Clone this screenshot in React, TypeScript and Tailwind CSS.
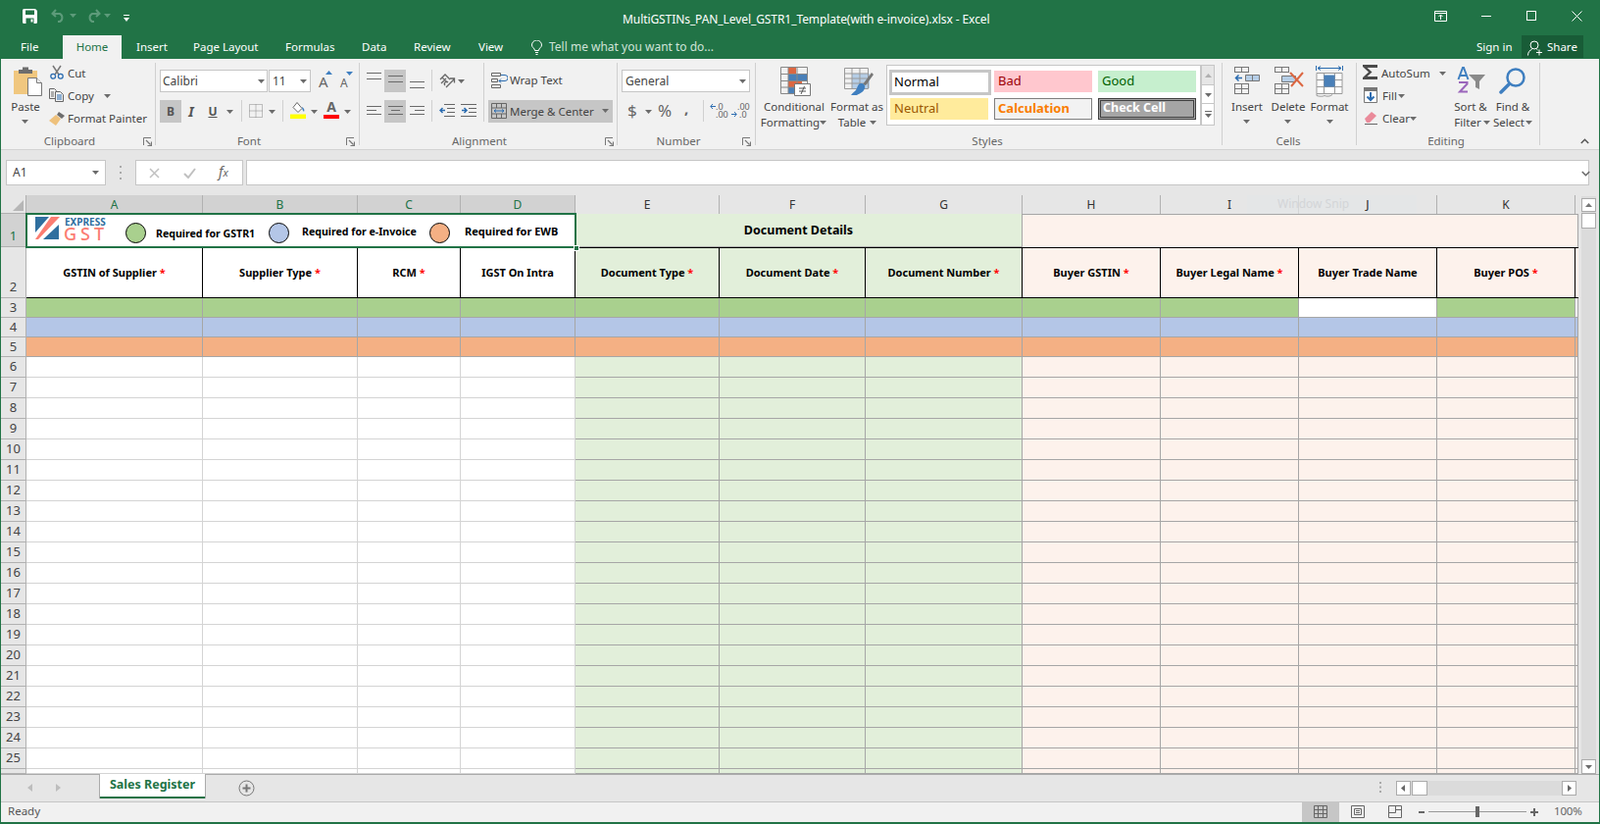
import React from 'react';

const Caret = ({ c, color = '#6b6b6b' }: { c: string; color?: string }) => (
  <svg className={`absolute ${c}`} width="7" height="4" viewBox="0 0 7 4"><path d="M0 0h7L3.5 4z" fill={color} /></svg>
);

const T = ({ c, children }: { c: string; children: React.ReactNode }) => (
  <div className={`absolute whitespace-nowrap text-[11.5px] leading-[16px] ${c}`}>{children}</div>
);

const TabLabel = ({ c, children }: { c: string; children: React.ReactNode }) => (
  <div className={`absolute top-[40px] whitespace-nowrap text-[11.5px] leading-[16px] text-white ${c}`}>{children}</div>
);

const Sep = ({ c }: { c: string }) => <div className={`absolute w-px bg-[#d0d0d0] ${c}`} />;

const Launcher = ({ c }: { c: string }) => (
  <svg className={`absolute ${c}`} width="9" height="9" viewBox="0 0 9 9" fill="none" stroke="#777">
    <path d="M.5 8V.5H8" /><path d="M3 3l4.5 4.5M8.5 4.5v4h-4" strokeWidth="1.2" />
  </svg>
);

const Lines = ({ c, d }: { c: string; d: string }) => (
  <svg className={`absolute ${c}`} width="15" height="10" viewBox="0 0 15 10" stroke="#6a6a6a"><path d={d} /></svg>
);

const StyleBtn = ({ c, children }: { c: string; children: React.ReactNode }) => (
  <div className={`absolute flex items-center pb-[2px] text-[13px] leading-none ${c}`}>{children}</div>
);

const GridMini = ({ c, rows = 2, cols = 2, w, h }: { c: string; rows?: number; cols?: number; w: number; h: number }) => {
  const lines: string[] = [];
  for (let i = 0; i <= rows; i++) lines.push(`M0 ${(i * (h - 1)) / rows + 0.5}H${w}`);
  for (let i = 0; i <= cols; i++) lines.push(`M${(i * (w - 1)) / cols + 0.5} 0V${h}`);
  return (
    <svg className={`absolute ${c}`} width={w} height={h} viewBox={`0 0 ${w} ${h}`} fill="none" stroke="#777">
      <path d={lines.join('')} />
    </svg>
  );
};

function TitleBar() {
  return (
    <div className="relative h-[60px] bg-[#217346] text-white">
      <svg className="absolute left-[23px] top-[9px]" width="15" height="15" viewBox="0 0 15 15">
        <path d="M0 1.5A1.5 1.5 0 0 1 1.5 0H13l2 2v11.5a1.5 1.5 0 0 1-1.5 1.5h-12A1.5 1.5 0 0 1 0 13.500z" fill="#fff" />
        <path d="M3 1.500h9v4.500H3zM3.500 9.500h8V15h-8z" fill="#217346" />
        <path d="M8.500 10.500h2v3h-2z" fill="#fff" />
      </svg>
      <svg className="absolute left-[52px] top-[8px]" width="16" height="15" viewBox="0 0 16 15" fill="none" stroke="#5d9b7a" strokeWidth="2">
        <path d="M5 2L1.500 6 5 9" /><path d="M2 6h7a4.500 4.500 0 0 1 0 8H7" />
      </svg>
      <Caret c="left-[71px] top-[14px]" color="#5d9b7a" />
      <svg className="absolute left-[87px] top-[8px]" width="16" height="15" viewBox="0 0 16 15" fill="none" stroke="#5d9b7a" strokeWidth="2">
        <path d="M11 2l3.500 4L11 9" /><path d="M14 6H7a4.500 4.500 0 0 0 0 8h2" />
      </svg>
      <Caret c="left-[106px] top-[14px]" color="#5d9b7a" />
      <svg className="absolute left-[126px] top-[15px]" width="6" height="7" viewBox="0 0 6 7" fill="#fff">
        <path d="M0 0h6v1H0zM0 3h6L3 7z" />
      </svg>
      <div className="absolute left-[635px] top-[12px] whitespace-nowrap text-[12px] leading-[16px] tracking-[-0.08px] text-white">MultiGSTINs_PAN_Level_GSTR1_Template(with e-invoice).xlsx - Excel</div>

      <svg className="absolute left-[1463px] top-[11px]" width="13" height="11" viewBox="0 0 13 11" fill="none" stroke="#fff">
        <path d="M.5.500h12v10H.500zM.5 2.500h12M6.500 9V4.500M4.500 6l2-2 2 2" />
      </svg>
      <div className="absolute left-[1511px] top-[16px] h-px w-[10px] bg-white" />
      <div className="absolute left-[1557px] top-[11px] h-[10px] w-[10px] border border-white" />
      <svg className="absolute left-[1603px] top-[11px]" width="11" height="11" viewBox="0 0 11 11" stroke="#fff">
        <path d="M.5.500l10 10M10.500.500l-10 10" />
      </svg>

      <TabLabel c="left-[21px]">File</TabLabel>
      <div className="absolute left-[64px] top-[36px] flex h-[24px] w-[60px] items-center justify-center bg-[#f1f1f1] text-[11.5px] text-[#217346]">Home</div>
      <TabLabel c="left-[139px]">Insert</TabLabel>
      <TabLabel c="left-[197px]">Page Layout</TabLabel>
      <TabLabel c="left-[291px]">Formulas</TabLabel>
      <TabLabel c="left-[369px]">Data</TabLabel>
      <TabLabel c="left-[422px]">Review</TabLabel>
      <TabLabel c="left-[488px]">View</TabLabel>
      <svg className="absolute left-[542px] top-[41px]" width="11" height="15" viewBox="0 0 11 15" fill="none" stroke="#fff">
        <path d="M3.500 10.500C3.500 8 .5 7.500.5 5a5 5 0 0 1 10 0c0 2.500-3 3-3 5.500zM4 12.500h3M4.500 14.500h2" />
      </svg>
      <div className="absolute left-[560px] top-[40px] whitespace-nowrap text-[12px] leading-[16px] text-[#cfe3d8]">Tell me what you want to do...</div>
      <TabLabel c="left-[1506px]">Sign in</TabLabel>
      <div className="absolute left-[1552px] top-[36px] h-[23px] w-[63px] bg-[#185c37]" />
      <svg className="absolute left-[1558px] top-[41px]" width="16" height="16" viewBox="0 0 16 16" fill="none" stroke="#fff">
        <circle cx="7" cy="5" r="4" /><path d="M.5 15.500c0-3.500 2-5.500 4-6M9.500 9.500l1 .5M9 12.500h6M12 9.500v6" />
      </svg>
      <TabLabel c="left-[1578px]">Share</TabLabel>
    </div>
  );
}

function ClipboardGroup() {
  return (
    <>
      <svg className="absolute left-[14px] top-[7px]" width="29" height="31" viewBox="0 0 29 31">
        <path d="M0 5h24v24H0z" fill="#f0c77f" />
        <path d="M5 4h4V1.500h6V4h4v4H5z" fill="#6d6d6d" />
        <path d="M14.500 12.500h9l5 5v13h-14z" fill="#fff" stroke="#777" />
        <path d="M23.500 12.500v5h5" fill="#fff" stroke="#777" />
      </svg>
      <T c="left-[26px] top-[41px] -translate-x-1/2">Paste</T>
      <Caret c="left-[22px] top-[62px]" />
      <svg className="absolute left-[51px] top-[6px]" width="14" height="15" viewBox="0 0 14 15" fill="none">
        <path d="M3 1l6 9M11 1L5 10" stroke="#777" strokeWidth="1.500" />
        <circle cx="3.200" cy="11.800" r="2.400" stroke="#2b6cb0" strokeWidth="1.300" />
        <circle cx="10.800" cy="11.800" r="2.400" stroke="#2b6cb0" strokeWidth="1.300" />
      </svg>
      <T c="left-[69px] top-[7px]">Cut</T>
      <svg className="absolute left-[50px] top-[30px]" width="15" height="14" viewBox="0 0 15 14" fill="none" stroke="#666">
        <path d="M.5.500h5l2 2v8h-7zM2 4h3M2 6h3M2 8h3" />
        <path d="M6.500 3.500h5l3 3v7h-8z" fill="#f1f1f1" />
        <path d="M8 7h5M8 9h5M8 11h5" stroke="#2b6cb0" />
      </svg>
      <T c="left-[69px] top-[30px]">Copy</T>
      <Caret c="left-[106px] top-[36px]" />
      <svg className="absolute left-[50px] top-[54px]" width="16" height="14" viewBox="0 0 16 14">
        <path d="M10 0l6 4-3 3-5-4z" fill="#6d6d6d" />
        <path d="M7 3l5 4-5 7-7-5z" fill="#eec17c" />
      </svg>
      <T c="left-[69px] top-[53px]">Format Painter</T>
      <T c="left-[71px] top-[76px] -translate-x-1/2 text-[#666]">Clipboard</T>
      <Launcher c="left-[146px] top-[80px]" />
      <Sep c="left-[158px] top-[4px] h-[84px]" />
    </>
  );
}

function FontGroup() {
  return (
    <>
      <div className="absolute left-[163px] top-[11px] h-[23px] w-[110px] border border-[#c6c6c6] bg-white pl-[2px] text-[12px] leading-[22px]">Calibri</div>
      <Caret c="left-[263px] top-[21px]" />
      <div className="absolute left-[274px] top-[11px] h-[23px] w-[43px] border border-[#c6c6c6] bg-white pl-[3px] text-[12px] leading-[22px]">11</div>
      <Caret c="left-[306px] top-[21px]" />
      <div className="absolute left-[325px] top-[14px] text-[15px] leading-[18px] text-[#666]">A</div>
      <svg className="absolute left-[332px] top-[12px]" width="7" height="4" viewBox="0 0 7 4"><path d="M0 4h7L3.500 0z" fill="#3f7fc0" /></svg>
      <div className="absolute left-[347px] top-[17px] text-[12px] leading-[16px] text-[#666]">A</div>
      <svg className="absolute left-[353px] top-[13px]" width="7" height="4" viewBox="0 0 7 4"><path d="M0 0h7L3.500 4z" fill="#3f7fc0" /></svg>

      <div className="absolute left-[163px] top-[42px] flex h-[23px] w-[22px] items-center justify-center bg-[#c6c6c6] text-[12px] font-bold text-[#555]">B</div>
      <div className="absolute left-[190px] top-[42px] flex h-[23px] w-[10px] items-center justify-center font-['Liberation_Serif',serif] text-[14px] font-bold italic text-[#555]">I</div>
      <div className="absolute left-[212px] top-[42px] flex h-[23px] w-[10px] items-center justify-center text-[12px] font-bold text-[#555] underline">U</div>
      <Caret c="left-[231px] top-[52px]" />
      <Sep c="left-[246px] top-[42px] h-[22px]" />
      <svg className="absolute left-[254px] top-[46px]" width="14" height="14" viewBox="0 0 14 14" fill="none" stroke="#888" strokeDasharray="1 1">
        <path d="M.5.500h13v13H.500zM7 .5v13M.5 7h13" />
      </svg>
      <Caret c="left-[274px] top-[52px]" />
      <Sep c="left-[288px] top-[42px] h-[22px]" />
      <svg className="absolute left-[296px] top-[44px]" width="16" height="17" viewBox="0 0 16 17">
        <path d="M7 .5l5 6-4 4-5-5z" fill="#fff" stroke="#666" />
        <path d="M12 5c2 1 3 3 2 5-1-1-2-3-2-5z" fill="#3f7fc0" />
        <path d="M0 12.500h16V17H0z" fill="#ffff00" />
      </svg>
      <Caret c="left-[317px] top-[52px]" />
      <div className="absolute left-[332px] top-[40px] w-[12px] text-center text-[14px] font-bold leading-[18px] text-[#666]">A</div>
      <div className="absolute left-[330px] top-[57px] h-[4px] w-[16px] bg-[#ff0000]" />
      <Caret c="left-[351px] top-[52px]" />
      <T c="left-[254px] top-[76px] -translate-x-1/2 text-[#666]">Font</T>
      <Launcher c="left-[353px] top-[80px]" />
      <Sep c="left-[366px] top-[4px] h-[84px]" />
    </>
  );
}

function AlignmentGroup() {
  return (
    <>
      <Lines c="left-[374px] top-[14px]" d="M0 .5h15M0 6.500h15" />
      <div className="absolute left-[392px] top-[11px] h-[23px] w-[22px] bg-[#c6c6c6]" />
      <Lines c="left-[396px] top-[17px]" d="M0 .5h15M0 6.500h15" />
      <Lines c="left-[418px] top-[23px]" d="M0 .5h15M0 6.500h15" />
      <Sep c="left-[440px] top-[11px] h-[22px]" />
      <svg className="absolute left-[448px] top-[14px]" width="17" height="17" viewBox="0 0 17 17" fill="none" stroke="#666" strokeWidth="1.300">
        <path d="M1 7l5-5 5 5M3 5l5 5M2 11l5-5M6 13a2 2 0 1 1 3-3" /><path d="M7 15l8-8M11 6h4.500v4.500" />
      </svg>
      <Caret c="left-[467px] top-[21px]" />
      <Sep c="left-[493px] top-[4px] h-[60px]" />
      <svg className="absolute left-[501px] top-[14px]" width="17" height="16" viewBox="0 0 17 16" fill="none" stroke="#666">
        <path d="M.5.500h9v3h-9zM.5 6.500h6v3h-6zM.5 12.500h9v3h-9z" /><path d="M10 2.500h4a2.500 2.500 0 0 1 0 6H8M10 6.500l-2 2 2 2" stroke="#2b6cb0" />
      </svg>
      <T c="left-[520px] top-[14px]">Wrap Text</T>

      <Lines c="left-[374px] top-[48px]" d="M0 .5h15M0 4.500h10M0 8.500h15" />
      <div className="absolute left-[392px] top-[42px] h-[23px] w-[22px] bg-[#c6c6c6]" />
      <Lines c="left-[396px] top-[48px]" d="M0 .5h15M3 4.500h9M0 8.500h15" />
      <Lines c="left-[418px] top-[48px]" d="M0 .5h15M5 4.500h10M0 8.500h15" />
      <Sep c="left-[440px] top-[42px] h-[22px]" />
      <svg className="absolute left-[448px] top-[46px]" width="16" height="14" viewBox="0 0 16 14" fill="none" stroke="#666">
        <path d="M5 .5h11M8 4.500h8M8 8.500h8M5 12.500h11" /><path d="M6 6.500H1M3.500 4l-2.500 2.500L3.500 9" stroke="#2b6cb0" strokeWidth="1.500" />
      </svg>
      <svg className="absolute left-[470px] top-[46px]" width="16" height="14" viewBox="0 0 16 14" fill="none" stroke="#666">
        <path d="M0 .5h16M8 4.500h8M8 8.500h8M0 12.500h16" /><path d="M1 6.500h5M3.500 4L6 6.500 3.500 9" stroke="#2b6cb0" strokeWidth="1.500" />
      </svg>
      <div className="absolute left-[498px] top-[42px] h-[23px] w-[127px] bg-[#c6c6c6]" />
      <svg className="absolute left-[501px] top-[45px]" width="16" height="16" viewBox="0 0 16 16" fill="none" stroke="#666">
        <path d="M.5.500h15v15H.500zM.5 5h15M.5 11h15M5.500.5V5M10.500.5V5M5.500 11v4.500M10.500 11v4.500" /><path d="M3 8h10M3 8l2-1.500M3 8l2 1.500M13 8l-2-1.500M13 8l-2 1.500" stroke="#2b6cb0" />
      </svg>
      <T c="left-[520px] top-[46px]">Merge &amp; Center</T>
      <Caret c="left-[614px] top-[51px]" />
      <T c="left-[489px] top-[76px] -translate-x-1/2 text-[#666]">Alignment</T>
      <Launcher c="left-[617px] top-[80px]" />
      <Sep c="left-[629px] top-[4px] h-[84px]" />
    </>
  );
}

function NumberGroup() {
  return (
    <>
      <div className="absolute left-[634px] top-[11px] h-[23px] w-[131px] border border-[#c6c6c6] bg-white pl-[3px] text-[12px] leading-[22px]">General</div>
      <Caret c="left-[754px] top-[21px]" />
      <div className="absolute left-[640px] top-[43px] text-[17px] leading-[20px] text-[#666]">$</div>
      <Caret c="left-[658px] top-[52px]" />
      <div className="absolute left-[671px] top-[43px] text-[17px] leading-[20px] text-[#666]">%</div>
      <div className="absolute left-[698px] top-[40px] text-[15px] font-bold leading-[20px] text-[#666]">,</div>
      <Sep c="left-[717px] top-[42px] h-[22px]" />
      <div className="absolute left-[730px] top-[45px] text-[9px] leading-[8px] text-[#666]">.0<br />.00</div>
      <svg className="absolute left-[724px] top-[45px]" width="6" height="7" viewBox="0 0 6 7" fill="none" stroke="#2b6cb0"><path d="M6 3.500H1M3 1L.8 3.500 3 6" /></svg>
      <div className="absolute left-[752px] top-[45px] text-[9px] leading-[8px] text-[#666]">.00<br /><span className="pl-[2px]">.0</span></div>
      <svg className="absolute left-[746px] top-[53px]" width="6" height="7" viewBox="0 0 6 7" fill="none" stroke="#2b6cb0"><path d="M0 3.500h5M3 1l2.200 2.500L3 6" /></svg>
      <T c="left-[692px] top-[76px] -translate-x-1/2 text-[#666]">Number</T>
      <Launcher c="left-[757px] top-[80px]" />
      <Sep c="left-[770px] top-[4px] h-[84px]" />
    </>
  );
}

function StylesGroup() {
  return (
    <>
      <svg className="absolute left-[796px] top-[8px]" width="31" height="30" viewBox="0 0 31 30" fill="none">
        <path d="M8 1h8v7H8z" fill="#dc6742" /><path d="M8 8h19v6H8z" fill="#4a80b8" /><path d="M8 14h14v7H8z" fill="#dc6742" /><path d="M8 21h6v6H8z" fill="#4a80b8" />
        <path d="M.5.500h27v27H.500zM.5 7.500h27M.5 14.500h27M.5 21h27M8 .5v27M17 .5v27" stroke="#888" />
        <path d="M14.500 17.500h16v12h-16z" fill="#fff" stroke="#777" />
        <path d="M19 22h7M19 25h7M24.500 20l-3.500 8" stroke="#555" />
      </svg>
      <T c="left-[810px] top-[41px] -translate-x-1/2">Conditional</T>
      <T c="left-[806px] top-[57px] -translate-x-1/2">Formatting</T>
      <Caret c="left-[836px] top-[63px]" />
      <svg className="absolute left-[861px] top-[9px]" width="30" height="29" viewBox="0 0 30 29" fill="none">
        <path d="M8 6h18v15H8z" fill="#b5cde6" />
        <path d="M.5.500h24v21H.500zM.5 6h24M.5 11h24M.5 16h24M8 .5v21M16 .5v21" stroke="#999" />
        <path d="M19 17l9-12 2 2-8 11z" fill="#777" />
        <path d="M17 16c3 0 5 2 4 5-1 4-5 5-8 7H7c2-3 5-4 6-7 1-3 2-5 4-5z" fill="#3f7fc0" />
      </svg>
      <T c="left-[874px] top-[41px] -translate-x-1/2">Format as</T>
      <T c="left-[869px] top-[57px] -translate-x-1/2">Table</T>
      <Caret c="left-[887px] top-[63px]" />

      <div className="absolute left-[904px] top-[6px] h-[62px] w-[321px] border border-[#c6c6c6] bg-white" />
      <StyleBtn c="left-[907px] top-[11px] h-[26px] w-[104px] border-[3px] border-[#c6c6c6] bg-white pl-[2px] text-black">Normal</StyleBtn>
      <StyleBtn c="left-[1014px] top-[12px] h-[22px] w-[100px] bg-[#ffc7ce] pl-[4px] text-[#9c0006]">Bad</StyleBtn>
      <StyleBtn c="left-[1120px] top-[12px] h-[22px] w-[100px] bg-[#c6efce] pl-[4px] text-[#006100]">Good</StyleBtn>
      <StyleBtn c="left-[908px] top-[40px] h-[22px] w-[100px] bg-[#ffeb9c] pl-[4px] text-[#9c5700]">Neutral</StyleBtn>
      <StyleBtn c="left-[1014px] top-[40px] h-[22px] w-[100px] border border-[#7f7f7f] bg-[#f2f2f2] pl-[3px] font-bold text-[#fa7d00]">Calculation</StyleBtn>
      <div className="absolute left-[1120px] top-[40px] h-[22px] w-[100px] border border-[#3f3f3f] bg-[#a5a5a5] p-px">
        <div className="flex h-full items-center border border-[#3f3f3f] pb-px pl-[2px] text-[12.5px] font-bold leading-none text-white">Check Cell</div>
      </div>
      <div className="absolute left-[1225px] top-[6px] h-[21px] w-[14px] border border-[#c6c6c6] bg-[#e6e6e6]" />
      <svg className="absolute left-[1229px] top-[15px]" width="7" height="4" viewBox="0 0 7 4"><path d="M0 4h7L3.500 0z" fill="#b0b0b0" /></svg>
      <div className="absolute left-[1225px] top-[26px] h-[20px] w-[14px] border border-[#c6c6c6] bg-white" />
      <Caret c="left-[1229px] top-[35px]" />
      <div className="absolute left-[1225px] top-[45px] h-[23px] w-[14px] border border-[#c6c6c6] bg-white" />
      <svg className="absolute left-[1229px] top-[53px]" width="7" height="7" viewBox="0 0 7 7"><path d="M0 0h7v1H0zM0 3h7L3.500 7z" fill="#6b6b6b" /></svg>
      <T c="left-[1007px] top-[76px] -translate-x-1/2 text-[#666]">Styles</T>
      <Sep c="left-[1246px] top-[4px] h-[84px]" />
    </>
  );
}

function CellsGroup() {
  return (
    <>
      <GridMini c="left-[1259px] top-[8px]" rows={1} w={15} h={6} />
      <GridMini c="left-[1259px] top-[25px]" w={15} h={11} />
      <svg className="absolute left-[1259px] top-[15px]" width="26" height="9" viewBox="0 0 26 9" fill="none">
        <path d="M11.500 1.500h14v6h-14z" fill="#b5cde6" stroke="#777" /><path d="M18.500 1.500v6" stroke="#777" />
        <path d="M8 4.500H1.500M4.500 1.500l-3 3 3 3" stroke="#2b6cb0" strokeWidth="1.500" />
      </svg>
      <T c="left-[1272px] top-[41px] -translate-x-1/2">Insert</T>
      <Caret c="left-[1268px] top-[62px]" />

      <GridMini c="left-[1300px] top-[8px]" rows={1} w={15} h={6} />
      <GridMini c="left-[1300px] top-[25px]" w={15} h={11} />
      <svg className="absolute left-[1306px] top-[12px]" width="25" height="19" viewBox="0 0 25 19" fill="none">
        <path d="M1.500 5.500h14v6h-14z" fill="#b5cde6" stroke="#777" />
        <path d="M11 16L23 2M10 2l13 14" stroke="#dc6742" strokeWidth="2" />
      </svg>
      <T c="left-[1314px] top-[41px] -translate-x-1/2">Delete</T>
      <Caret c="left-[1310px] top-[62px]" />

      <svg className="absolute left-[1342px] top-[6px]" width="28" height="33" viewBox="0 0 28 33" fill="none">
        <path d="M.5 1v5M27.500 1v5M2 3.500h24M2 3.500l3-2M2 3.500l3 2M26 3.500l-3-2M26 3.500l-3 2" stroke="#2b6cb0" />
        <path d="M1 8.500h26v21H1z" fill="#fff" stroke="#999" />
        <path d="M1 15.500h26M1 22.500h26M8.500 8.500v21M19.500 8.500v21" stroke="#999" />
        <path d="M8.500 10.500h11v12h-11z" fill="#4a80b8" />
        <path d="M1 29.500v2c3 1 6 1 8 0 2 1 6 1 8-1" stroke="#999" />
      </svg>
      <T c="left-[1356px] top-[41px] -translate-x-1/2">Format</T>
      <Caret c="left-[1353px] top-[62px]" />
      <T c="left-[1314px] top-[76px] -translate-x-1/2 text-[#666]">Cells</T>
      <Sep c="left-[1383px] top-[4px] h-[84px]" />
    </>
  );
}

function EditingGroup() {
  return (
    <>
      <svg className="absolute left-[1390px] top-[6px]" width="15" height="15" viewBox="0 0 15 15"><path d="M0 0h15v3H4.500l5 4.500-5 4.500H15v3H0v-2l6-5.500L0 2z" fill="#4b4b4b" /></svg>
      <T c="left-[1409px] top-[7px]">AutoSum</T>
      <Caret c="left-[1468px] top-[13px]" />
      <svg className="absolute left-[1391px] top-[29px]" width="14" height="16" viewBox="0 0 14 16" fill="none">
        <path d="M.5.500h13v15H.500z" fill="#fff" stroke="#777" /><path d="M0 0h14v4H0z" fill="#777" />
        <path d="M7 5v8M3.500 9.500L7 13l3.500-3.500" stroke="#2b6cb0" strokeWidth="2" />
      </svg>
      <T c="left-[1410px] top-[30px]">Fill</T>
      <Caret c="left-[1426px] top-[36px]" />
      <svg className="absolute left-[1391px] top-[53px]" width="14" height="14" viewBox="0 0 14 14" fill="none">
        <path d="M1 8l7-7 5 4-7 7H3z" fill="#ea8a9a" /><path d="M1 13.500h13" stroke="#666" />
      </svg>
      <T c="left-[1410px] top-[53px]">Clear</T>
      <Caret c="left-[1438px] top-[59px]" />

      <svg className="absolute left-[1486px] top-[8px]" width="29" height="28" viewBox="0 0 29 28" fill="none">
        <path d="M1.500 13L6 1h1l4.500 12M3 9h7" stroke="#3f7fc0" strokeWidth="2" />
        <path d="M2 16h8.500v1.500L3 25.500h8" stroke="#9b66bb" strokeWidth="2" />
        <path d="M12 8h17l-6 7v8l-4-2v-6z" fill="#8a8a8a" />
      </svg>
      <T c="left-[1500px] top-[41px] -translate-x-1/2">Sort &amp;</T>
      <T c="left-[1497px] top-[57px] -translate-x-1/2">Filter</T>
      <Caret c="left-[1513px] top-[63px]" />
      <svg className="absolute left-[1529px] top-[8px]" width="28" height="28" viewBox="0 0 28 28" fill="none">
        <circle cx="17" cy="11" r="8.500" stroke="#3f7fc0" strokeWidth="2.500" />
        <path d="M10.500 17.500L2 26" stroke="#3f7fc0" strokeWidth="3.500" strokeLinecap="round" />
      </svg>
      <T c="left-[1543px] top-[41px] -translate-x-1/2">Find &amp;</T>
      <T c="left-[1539px] top-[57px] -translate-x-1/2">Select</T>
      <Caret c="left-[1556px] top-[63px]" />
      <T c="left-[1475px] top-[76px] -translate-x-1/2 text-[#666]">Editing</T>
      <Sep c="left-[1570px] top-[4px] h-[84px]" />
      <svg className="absolute left-[1612px] top-[81px]" width="9" height="6" viewBox="0 0 9 6" fill="none" stroke="#555" strokeWidth="1.500"><path d="M.8 5l3.700-3.700L8.200 5" /></svg>
    </>
  );
}

function FormulaBar() {
  return (
    <div className="relative h-[46px] bg-[#e6e6e6]">
      <div className="absolute left-[6px] top-[10px] h-[26px] w-[102px] border border-[#c6c6c6] bg-white pl-[6px] text-[12px] leading-[24px]">A1</div>
      <Caret c="left-[94px] top-[21px]" />
      <svg className="absolute left-[122px] top-[16px]" width="2" height="14" viewBox="0 0 2 14" fill="#aaa"><path d="M0 0h2v2H0zM0 6h2v2H0zM0 12h2v2H0z" /></svg>
      <div className="absolute left-[138px] top-[10px] h-[26px] w-[110px] border border-[#c6c6c6] bg-white" />
      <svg className="absolute left-[152px] top-[18px]" width="11" height="11" viewBox="0 0 11 11" stroke="#c0c0c0" strokeWidth="1.500"><path d="M1 1l9 9M10 1l-9 9" /></svg>
      <svg className="absolute left-[187px] top-[18px]" width="13" height="11" viewBox="0 0 13 11" fill="none" stroke="#c0c0c0" strokeWidth="2"><path d="M1 6l4 4 7-9" /></svg>
      <div className="absolute left-[223px] top-[12px] font-['Liberation_Serif',serif] text-[14px] italic leading-[20px] text-[#666]">f<span className="text-[11px]">x</span></div>
      <div className="absolute left-[251px] top-[10px] h-[26px] w-[1370px] border border-[#c6c6c6] bg-white" />
      <svg className="absolute left-[1613px] top-[21px]" width="9" height="6" viewBox="0 0 9 6" fill="none" stroke="#666" strokeWidth="1.500"><path d="M.8 1l3.700 3.700L8.200 1" /></svg>
    </div>
  );
}

const cols = ['A', 'B', 'C', 'D', 'E', 'F', 'G', 'H', 'I', 'J', 'K'];
const headers: [string, boolean][] = [
  ['GSTIN of Supplier', true],
  ['Supplier Type', true],
  ['RCM', true],
  ['IGST On Intra', false],
  ['Document Type', true],
  ['Document Date', true],
  ['Document Number', true],
  ['Buyer GSTIN', true],
  ['Buyer Legal Name', true],
  ['Buyer Trade Name', false],
  ['Buyer POS', true],
];

// background and line colour per zone: A-D white, E-G green, H-K peach
const zone = (i: number) => (i < 4 ? 'bg-white border-[#d4d4d4]' : i < 7 ? 'bg-[#e2efda] border-[#a6a6a6]' : 'bg-[#fdf2ec] border-[#a6a6a6]');
const zoneBg = (i: number) => (i < 4 ? 'bg-white' : i < 7 ? 'bg-[#e2efda]' : 'bg-[#fdf2ec]');

function Sheet() {
  const bodyRows = Array.from({ length: 21 }, (_, i) => i + 6);
  const rowHead = 'flex items-center justify-center border-r border-b border-[#b1b1b1] bg-[#e6e6e6] text-[13px] text-[#444]';
  return (
    <div className="relative h-[590px] overflow-hidden">
      <div className="absolute left-[1px] top-0 grid h-[590px] w-[1609px] grid-cols-[26px_180px_158px_105px_117px_147px_149px_160px_141px_141px_141px_141px_3px] grid-rows-[19px_34px_52px_20px_20px_20px_repeat(20,21px)_5px] overflow-hidden">
        <div className="relative border-r border-b border-[#b1b1b1] bg-[#e6e6e6]">
          <svg className="absolute bottom-[2px] right-[2px]" width="11" height="11" viewBox="0 0 11 11"><path d="M11 0v11H0z" fill="#b6b6b6" /></svg>
        </div>
        {cols.map((c, i) => (
          <div key={c} className={`flex items-center justify-center border-r border-[#b1b1b1] text-[12px] ${i < 4 ? 'bg-[#d2d2d2] text-[#217346]' : 'bg-[#e6e6e6] text-[#333]'}`}>
            {c}
          </div>
        ))}
        <div className="bg-[#e6e6e6]" />

        <div className="flex items-end justify-center border-r border-b border-[#b1b1b1] bg-[#d2d2d2] pb-[1px] text-[13px] text-[#217346]">1</div>
        <div className="relative col-span-4 bg-white text-[10.6px] font-bold text-black">
          <svg className="absolute left-[9px] top-[3px]" width="25" height="23" viewBox="0 0 25 23">
            <path d="M0 0h14L0 16z" fill="#2f6f9f" />
            <path d="M16 0h9L3 23H0z" fill="#fb7d72" />
            <path d="M24 8v15H8z" fill="#2f6f9f" />
          </svg>
          <div className="absolute left-[39px] top-[4px] font-['Open_Sans',sans-serif] text-[10px] font-bold leading-[8px] text-[#2f6f9f]">EXPRESS</div>
          <div className="absolute left-[38px] top-[12px] font-['Inter',sans-serif] text-[18px] font-medium leading-[16px] tracking-[4px] text-[#fb7d72]">GST</div>
          <div className="absolute left-[101px] top-[9px] h-[21px] w-[21px] rounded-full border border-black bg-[#a9d08e]" />
          <div className="absolute left-[132px] top-[12px] leading-[16px]">Required for GSTR1</div>
          <div className="absolute left-[247px] top-[9px] h-[21px] w-[21px] rounded-full border border-black bg-[#b4c6e7]" />
          <div className="absolute left-[281px] top-[10px] leading-[16px]">Required for e-Invoice</div>
          <div className="absolute left-[411px] top-[9px] h-[21px] w-[21px] rounded-full border border-black bg-[#f4b084]" />
          <div className="absolute left-[447px] top-[10px] text-[11px] leading-[16px]">Required for EWB</div>
        </div>
        <div className="col-span-3 flex items-center justify-center border-r border-b border-[#a6a6a6] bg-[#e2efda] pt-[2px] text-[12.5px] font-bold text-black">Document Details</div>
        <div className="col-span-5 border-t border-r border-[#a6a6a6] bg-[#fdf2ec]" />

        <div className="flex items-end justify-center border-r border-b border-[#b1b1b1] bg-[#e6e6e6] pb-[1px] text-[13px] text-[#444]">2</div>
        {headers.map(([h, req], i) => (
          <div key={h} className={`flex items-center justify-center border-t border-r border-b border-black text-[11px] font-bold text-black ${zoneBg(i)}`}>
            <span>
              {h}
              {req && <span className="text-[#ff0000]"> *</span>}
            </span>
          </div>
        ))}
        <div className="border-t border-b border-black bg-[#fdf2ec]" />

        {[3, 4, 5].map((r) => (
          <React.Fragment key={r}>
            <div className={rowHead}>{r}</div>
            {cols.map((c) => (
              <div
                key={c}
                className={`border-r border-b border-[#a6a6a6] ${r === 3 ? (c === 'J' ? 'bg-white' : 'bg-[#a9d08e]') : r === 4 ? 'bg-[#b4c6e7]' : 'bg-[#f4b084]'}`}
              />
            ))}
            <div className={`border-r border-b border-[#a6a6a6] ${r === 3 ? 'bg-white' : r === 4 ? 'bg-[#b4c6e7]' : 'bg-[#f4b084]'}`} />
          </React.Fragment>
        ))}

        {bodyRows.map((r) => (
          <React.Fragment key={r}>
            <div className={rowHead}>{r < 26 ? r : ''}</div>
            {cols.map((c, i) => (
              <div key={c} className={`border-r border-b ${zone(i)}`} />
            ))}
            <div className="border-r border-b border-[#a6a6a6] bg-[#fdf2ec]" />
          </React.Fragment>
        ))}
      </div>

      {/* selection around the merged A1:D1 */}
      <div className="absolute left-[26px] top-[18px] h-[36px] w-[562px] border-2 border-[#217346]" />
      <div className="absolute left-[585px] top-[51px] h-[6px] w-[6px] border border-white bg-[#217346]" />

      {/* ghost of the snipping tool over the column header */}
      <div className="absolute left-[1272px] top-[0px] h-[19px] w-[173px] bg-[#e3e5e7]/70" />
      <div className="absolute left-[1303px] top-[1px] text-[12px] leading-[16px] text-[#d3d5d7]">Window Snip</div>
      <div className="absolute left-[1390px] top-[0px] flex h-[19px] w-[10px] items-center justify-center text-[12px] text-[#333]">J</div>

      {/* vertical scrollbar */}
      <div className="absolute left-[1610px] top-0 h-[590px] w-[22px] bg-[#e6e6e6]" />
      <div className="absolute left-[1613px] top-[1px] h-[589px] w-[15px] bg-[#dbdbdb]" />
      <div className="absolute left-[1613px] top-[3px] h-[14px] w-[15px] border border-[#ababab] bg-white" />
      <svg className="absolute left-[1617px] top-[8px]" width="7" height="4" viewBox="0 0 7 4"><path d="M0 4h7L3.500 0z" fill="#777" /></svg>
      <div className="absolute left-[1613px] top-[18px] h-[16px] w-[15px] border border-[#ababab] bg-white" />
      <div className="absolute left-[1613px] top-[575px] h-[15px] w-[15px] border border-[#ababab] bg-white" />
      <Caret c="left-[1617px] top-[581px]" />
    </div>
  );
}

function SheetTabs() {
  return (
    <div className="relative h-[28px] border-t border-[#ababab] bg-[#e6e6e6]">
      <svg className="absolute left-[28px] top-[9px]" width="5" height="8" viewBox="0 0 5 8"><path d="M5 0v8L0 4z" fill="#bdbdbd" /></svg>
      <svg className="absolute left-[57px] top-[9px]" width="5" height="8" viewBox="0 0 5 8"><path d="M0 0v8l5-4z" fill="#bdbdbd" /></svg>
      <div className="absolute left-[101px] top-[-1px] flex h-[25px] w-[109px] items-center justify-center border-b-2 border-[#217346] bg-white text-[12.5px] font-bold text-[#217346]">Sales Register</div>
      <div className="absolute left-[101px] top-[-1px] h-[25px] w-px bg-[#ababab]" />
      <div className="absolute left-[209px] top-[-1px] h-[25px] w-px bg-[#ababab]" />
      <svg className="absolute left-[243px] top-[5px]" width="17" height="17" viewBox="0 0 17 17" fill="none" stroke="#777">
        <circle cx="8.500" cy="8.500" r="7.500" /><path d="M4.500 8.500h8M8.500 4.500v8" strokeWidth="2" />
      </svg>
      <svg className="absolute left-[1407px] top-[7px]" width="2" height="11" viewBox="0 0 2 11" fill="#aaa"><path d="M0 0h2v2H0zM0 4.500h2v2H0zM0 9h2v2H0z" /></svg>
      <div className="absolute left-[1424px] top-[6px] h-[15px] w-[184px] bg-[#dbdbdb]" />
      <div className="absolute left-[1424px] top-[6px] h-[15px] w-[15px] border border-[#ababab] bg-white" />
      <svg className="absolute left-[1429px] top-[10px]" width="4" height="7" viewBox="0 0 4 7"><path d="M4 0v7L0 3.500z" fill="#666" /></svg>
      <div className="absolute left-[1440px] top-[6px] h-[15px] w-[16px] border border-[#ababab] bg-white" />
      <div className="absolute left-[1593px] top-[6px] h-[15px] w-[15px] border border-[#ababab] bg-white" />
      <svg className="absolute left-[1599px] top-[10px]" width="4" height="7" viewBox="0 0 4 7"><path d="M0 0v7l4-3.500z" fill="#666" /></svg>
    </div>
  );
}

function StatusBar() {
  return (
    <div className="relative h-[23px] border-t border-[#c6c6c6] bg-[#f1f1f1]">
      <T c="left-[8px] top-[1px] text-[#555]">Ready</T>
      <div className="absolute left-[1328px] top-0 h-[22px] w-[38px] bg-[#c6c6c6]" />
      <svg className="absolute left-[1340px] top-[3px]" width="14" height="13" viewBox="0 0 14 13" fill="none" stroke="#666">
        <path d="M.5.500h13v12H.500zM.5 4.500h13M.5 8.500h13M4.500.5v12M9.500.5v12" />
      </svg>
      <svg className="absolute left-[1378px] top-[3px]" width="14" height="13" viewBox="0 0 14 13" fill="none" stroke="#666">
        <path d="M.5.500h13v12H.500zM3.500 3.500h7v6h-7zM5 5.500h4M5 7.500h4" />
      </svg>
      <svg className="absolute left-[1416px] top-[3px]" width="14" height="13" viewBox="0 0 14 13" fill="none" stroke="#666">
        <path d="M.5.500h13v12H.500zM.5 7.500h7V.5M7.500 4.500h6" />
      </svg>
      <div className="absolute left-[1447px] top-[9px] h-[2px] w-[6px] bg-[#666]" />
      <div className="absolute left-[1457px] top-[9px] h-px w-[100px] bg-[#999]" />
      <div className="absolute left-[1505px] top-[4px] h-[11px] w-[4px] bg-[#666]" />
      <svg className="absolute left-[1561px] top-[6px]" width="8" height="8" viewBox="0 0 8 8" fill="#666"><path d="M3 0h2v3h3v2H5v3H3V5H0V3h3z" /></svg>
      <T c="left-[1585px] top-[1px] text-[#666] tracking-[-0.2px]">100%</T>
    </div>
  );
}

export default function App() {
  return (
    <div className="relative h-[840px] w-[1632px] overflow-hidden bg-[#e6e6e6] font-['Noto_Sans',sans-serif] text-[#444]">
      <TitleBar />
      <div className="relative h-[93px] border-b border-[#d2d2d2] bg-[#f1f1f1]">
        <ClipboardGroup />
        <FontGroup />
        <AlignmentGroup />
        <NumberGroup />
        <StylesGroup />
        <CellsGroup />
        <EditingGroup />
      </div>
      <FormulaBar />
      <Sheet />
      <SheetTabs />
      <StatusBar />
      <div className="absolute left-0 top-0 h-[840px] w-px bg-[#217346]" />
      <div className="absolute right-0 top-0 h-[840px] w-px bg-[#217346]" />
      <div className="absolute bottom-0 left-0 h-[2px] w-[1632px] bg-[#217346]" />
    </div>
  );
}
